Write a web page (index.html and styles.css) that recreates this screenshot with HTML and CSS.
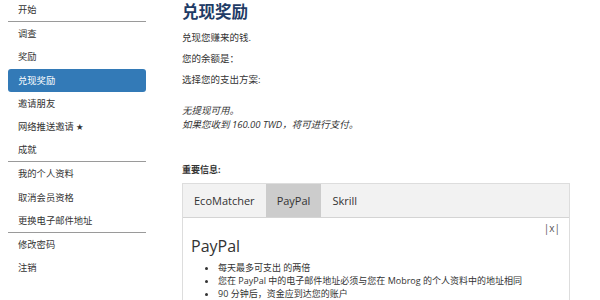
FILE: index.html
```html
<!DOCTYPE html>
<html lang="zh-CN">

<head>
  <meta charset="UTF-8">
  <title>兑现奖励</title>
  <link rel="stylesheet" href="styles.css">
</head>

<body>
  <div class="page">
    <ul class="sidebar">
      <li>开始</li>
      <li class="divider"></li>
      <li>调查</li>
      <li>奖励</li>
      <li class="active">兑现奖励</li>
      <li>邀请朋友</li>
      <li>网络推送邀请 <span class="star">★</span></li>
      <li>成就</li>
      <li class="divider"></li>
      <li>我的个人资料</li>
      <li>取消会员资格</li>
      <li>更换电子邮件地址</li>
      <li class="divider"></li>
      <li>修改密码</li>
      <li>注销</li>
    </ul>

    <div class="main">
      <h1>兑现奖励</h1>
      <p>兑现您赚来的钱.</p>
      <p>您的余额是：</p>
      <p>选择您的支出方案:</p>

      <div class="notice">
        无提现可用。<br>
        如果您收到 160.00 TWD，将可进行支付。
      </div>

      <div class="label">重要信息:</div>

      <div class="tabs">
        <div class="tab-bar">
          <div class="tab">EcoMatcher</div>
          <div class="tab active">PayPal</div>
          <div class="tab">Skrill</div>
        </div>
        <div class="tab-body">
          <div class="close">|x|</div>
          <h2>PayPal</h2>
          <ul class="points">
            <li>每天最多可支出 的两倍</li>
            <li>您在 PayPal 中的电子邮件地址必须与您在 Mobrog 的个人资料中的地址相同</li>
            <li>90 分钟后，资金应到达您的账户</li>
          </ul>
        </div>
      </div>
    </div>
  </div>
</body>

</html>
```

FILE: styles.css
```css
body {
  margin: 0;
  padding: 0 8px;
  font-family: "Open Sans", "Noto Sans CJK SC", sans-serif;
  color: #333;
  background: #fff;
  overflow: hidden;
}

.page {
  display: flex;
  align-items: flex-start;
}

.sidebar {
  list-style: none;
  margin: -2px 0 0 0;
  padding: 0;
  width: 138px;
  flex-shrink: 0;
}

.sidebar li {
  font-size: 9.3px;
  line-height: 13.2px;
  padding: 5px 10px;
  color: #333;
}

.sidebar li.divider {
  padding: 0;
  height: 1px;
  background: #9a9a9a;
}

.sidebar li.active {
  background: #337ab7;
  color: #fff;
  border-radius: 3px;
}

.star {
  font-size: 7px;
  vertical-align: 1px;
}

.main {
  margin-left: 36px;
  width: 388px;
}

h1 {
  margin: 0;
  font-size: 16.5px;
  line-height: 24px;
  font-weight: bold;
  color: #1f3c66;
}

p {
  margin: 7px 0 6px;
  font-size: 9.5px;
  line-height: 14px;
}

.notice {
  margin-top: 17px;
  font-size: 9.5px;
  line-height: 14px;
  font-style: italic;
}

.label {
  margin-top: 31px;
  font-size: 9px;
  line-height: 14px;
  font-weight: bold;
}

.tabs {
  margin-top: 6px;
  border: 1px solid #ddd;
  border-bottom: none;
}

.tab-bar {
  display: flex;
  background: #f2f2f2;
  border-bottom: 1px solid #d4d4d4;
}

.tab {
  padding: 0 11px;
  font-size: 11px;
  line-height: 33px;
  color: #333;
}

.tab.active {
  background: #cccccc;
}

.tab-body {
  padding: 3px 9px 20px 8px;
}

.close {
  text-align: right;
  font-size: 10px;
  line-height: 14px;
  color: #555;
}

h2 {
  margin: 0;
  font-size: 16px;
  line-height: 22px;
  font-weight: normal;
}

.points {
  margin: 4px 0 0;
  padding-left: 27px;
  font-size: 9px;
  line-height: 13px;
}
```
